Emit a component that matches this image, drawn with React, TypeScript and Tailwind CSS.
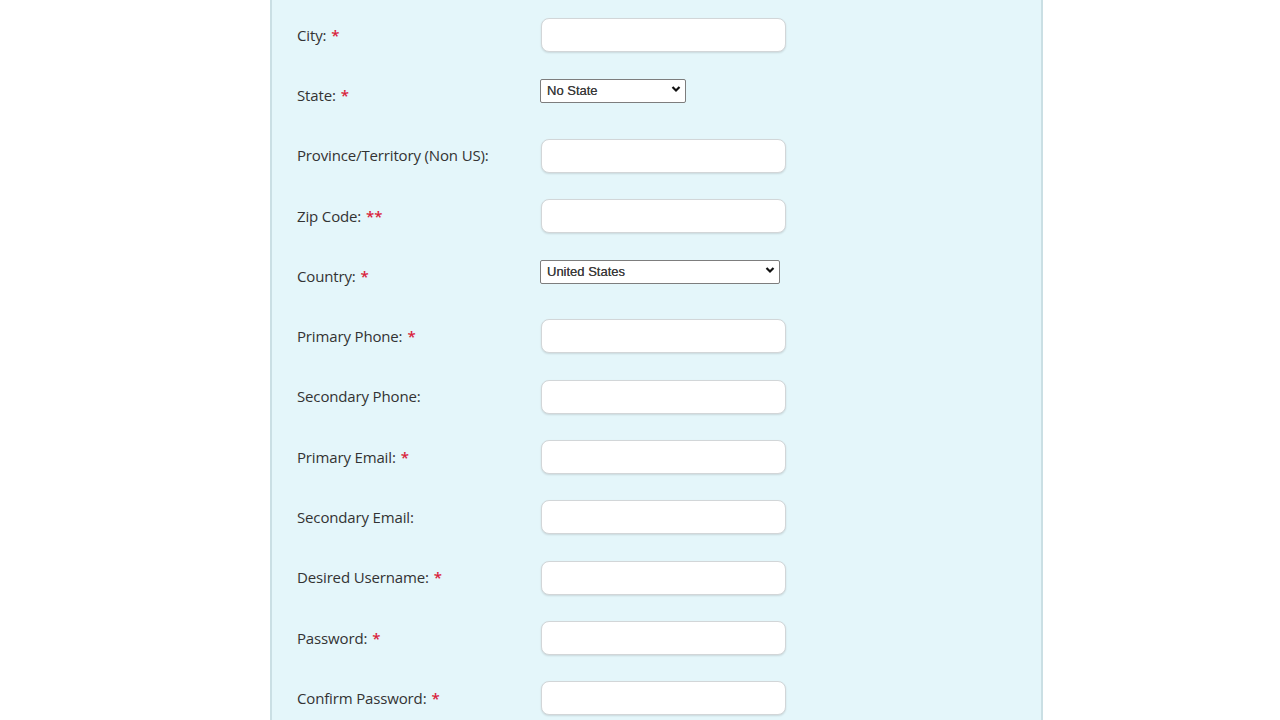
import React from "react";

type Row = { label: string; req?: 0 | 1 | 2; kind?: "input" | "select"; value?: string; w?: string };

const rows: Row[] = [
  { label: "City:", req: 1 },
  { label: "State:", req: 1, kind: "select", value: "No State", w: "w-[146px]" },
  { label: "Province/Territory (Non US):" },
  { label: "Zip Code:", req: 2 },
  { label: "Country:", req: 1, kind: "select", value: "United States", w: "w-[240px]" },
  { label: "Primary Phone:", req: 1 },
  { label: "Secondary Phone:" },
  { label: "Primary Email:", req: 1 },
  { label: "Secondary Email:" },
  { label: "Desired Username:", req: 1 },
  { label: "Password:", req: 1 },
  { label: "Confirm Password:", req: 1 },
];

function Chevron() {
  return (
    <svg width="10" height="8" viewBox="0 0 10 8" className="absolute right-[5px] top-[8px] pointer-events-none">
      <path d="M1.5 2 L5 5.5 L8.5 2" fill="none" stroke="#111" strokeWidth="2.2" />
    </svg>
  );
}

export default function App() {
  return (
    <div className="w-[1280px] h-[720px] overflow-hidden bg-white flex">
      <div className="ml-[270px] w-[773px] h-[760px] bg-[#e4f6fa] border-x-2 border-[#cadfe4] pt-[5px] pl-[25px]">
        {rows.map((r, i) => (
          <div key={i} className="h-[60.27px] flex items-center">
            <div
              className="w-[244px] text-[15px] tracking-[-0.15px] text-[#333]"
              style={{ fontFamily: '"Open Sans", "Noto Sans", sans-serif' }}
            >
              {r.label}
              {r.req ? (
                <span className="text-[#d9223a] ml-[5px] font-semibold">{r.req === 2 ? "**" : "*"}</span>
              ) : null}
            </div>
            {r.kind === "select" ? (
              <div className={`relative ${r.w} h-[24px] mt-[-13px] ml-[-1px]`}>
                <select
                  defaultValue={r.value}
                  className="appearance-none w-full h-full bg-white border border-[#7d7d7d] rounded-[2px] pl-[6px] text-[13px] text-[#3a3a3a] leading-[20px] [text-shadow:0_0_0.4px_#555]"
                  style={{ fontFamily: '"Liberation Sans", Arial, sans-serif' }}
                >
                  <option>{r.value}</option>
                </select>
                <Chevron />
              </div>
            ) : (
              <input
                type="text"
                className="w-[245px] h-[34px] bg-white border border-[#d2d6d8] rounded-[8px] shadow-[0_1px_2px_rgba(0,0,0,0.12)] outline-none"
              />
            )}
          </div>
        ))}
      </div>
    </div>
  );
}
